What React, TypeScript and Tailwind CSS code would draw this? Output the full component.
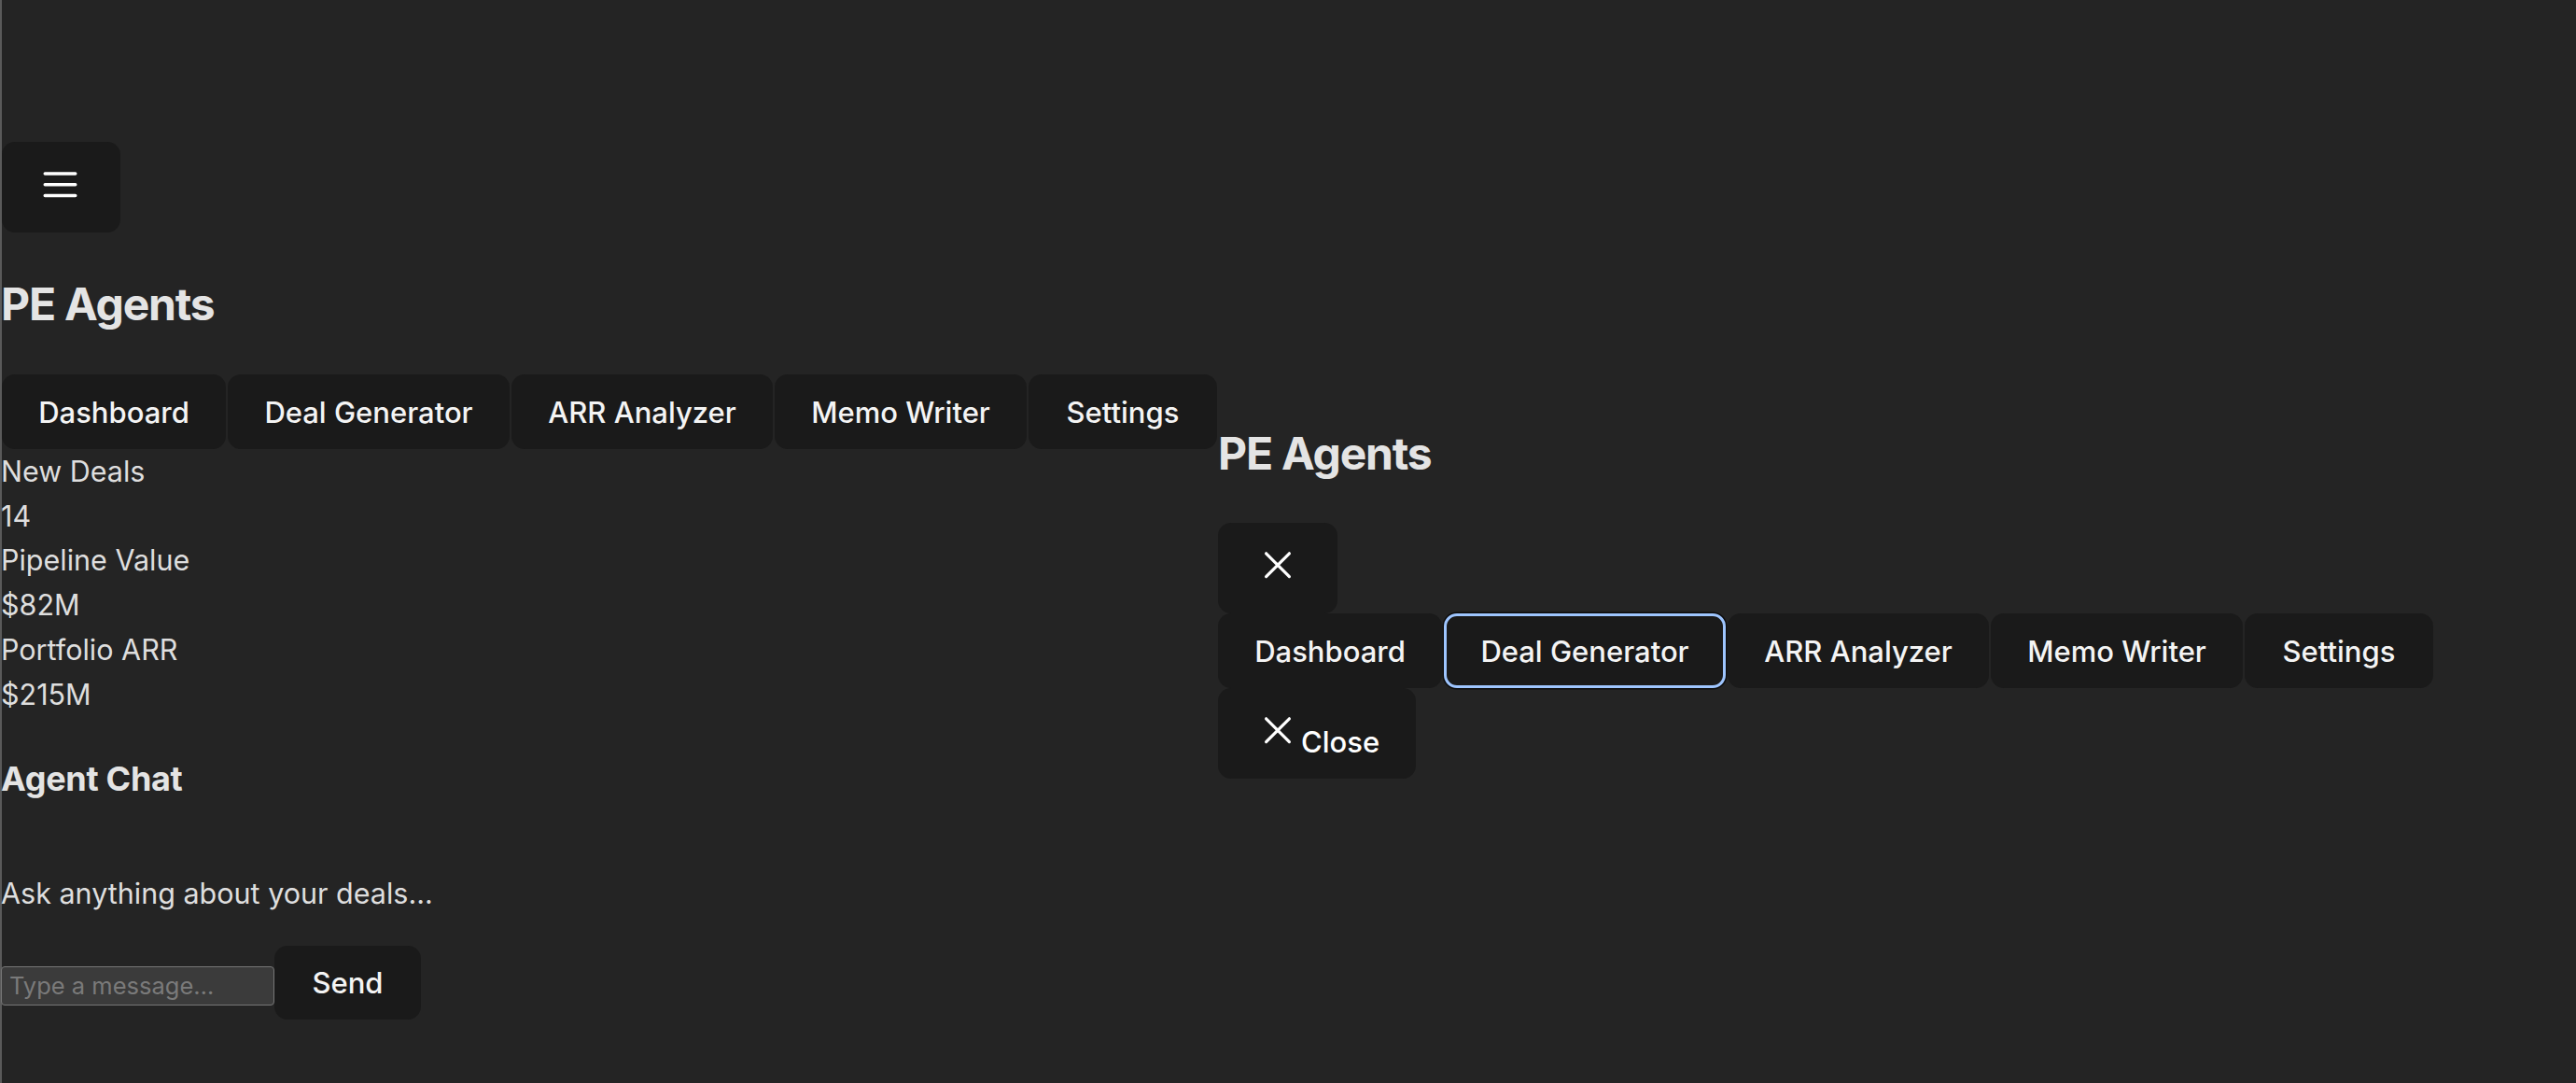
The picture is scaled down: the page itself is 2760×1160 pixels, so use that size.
import type { ReactNode } from 'react';

const tabs = [
  { label: 'Dashboard', w: 'w-[240px]' },
  { label: 'Deal Generator', w: 'w-[302px]' },
  { label: 'ARR Analyzer', w: 'w-[280px]' },
  { label: 'Memo Writer', w: 'w-[270px]' },
  { label: 'Settings', w: 'w-[202px]' },
];

const stats = [
  ['New Deals', '14'],
  ['Pipeline Value', '$82M'],
  ['Portfolio ARR', '$215M'],
];

function MenuIcon() {
  return (
    <svg width="48" height="48" viewBox="0 0 48 48" fill="none" stroke="currentColor" strokeWidth="3.4" strokeLinecap="round">
      <path d="M6.2 9h32.6M6.2 20.8h32.6M6.2 32.5h32.6" />
    </svg>
  );
}

function CloseIcon() {
  return (
    <svg width="48" height="48" viewBox="0 0 48 48" fill="none" stroke="currentColor" strokeWidth="3.2" strokeLinecap="round">
      <path d="M11.6 7.8 36.4 32.6M36.4 7.8 11.6 32.6" />
    </svg>
  );
}

function Btn({ className = '', children }: { className?: string; children: ReactNode }) {
  return (
    <button className={`rounded-[14px] bg-[#1a1a1a] text-[#f4f4f4] font-medium text-[31px] ${className}`}>
      {children}
    </button>
  );
}

function Nav({ focused }: { focused?: string }) {
  return (
    <nav className="flex gap-[2px]">
      {tabs.map((t) => (
        <Btn
          key={t.label}
          className={`${t.w} h-[80px] pt-[2px] ${
            t.label === focused ? 'border-[3.5px] border-[#9ec5fe] shadow-[0_0_0_1.5px_#0c0c0c]' : ''
          }`}
        >
          {t.label}
        </Btn>
      ))}
    </nav>
  );
}

function Title() {
  return <h1 className="text-[48px] leading-[53px] font-bold text-[#e4e4e4] tracking-[-1.2px]">PE Agents</h1>;
}

export default function App() {
  return (
    <div className="min-h-screen bg-[#242424] font-[Inter,sans-serif] flex">
      {/* sidebar */}
      <aside className="border-l-2 border-[#5a5a5a] pt-[152px] flex flex-col items-start">
        <Btn className="w-[127px] h-[97px] flex items-center justify-center text-white">
          <MenuIcon />
        </Btn>
        <div className="mt-[50px] mb-[49px] -ml-px">
          <Title />
        </div>
        <Nav />

        <div className="-ml-px text-[30.5px] leading-[47.7px] text-[#dedede]">
          {stats.map(([label, value]) => (
            <div key={label}>
              <div>{label}</div>
              <div>{value}</div>
            </div>
          ))}
        </div>

        <h3 className="-ml-px mt-[40px] text-[36px] leading-[55px] font-bold text-[#e4e4e4] tracking-[-0.3px]">Agent Chat</h3>

        <p className="-ml-px mt-[71px] text-[30.5px] leading-[47.5px] text-[#dedede]">Ask anything about your deals...</p>

        <div className="mt-[32px] flex items-start -ml-px">
          <input
            placeholder="Type a message…"
            className="mt-[22px] w-[293px] h-[42px] px-[8px] rounded-[4px] bg-[#3b3b3b] border-[1.75px] border-[#767676] text-[25.5px] text-white placeholder:text-[#7a7a7a] outline-none"
          />
          <Btn className="w-[157px] h-[79px] pt-[3px]">Send</Btn>
        </div>
      </aside>

      {/* open mobile menu */}
      <section className="pl-px pt-[459px] flex flex-col items-start">
        <Title />
        <Btn className="mt-[48px] w-[128px] h-[97px] flex items-center justify-center text-white">
          <CloseIcon />
        </Btn>
        <Nav focused="Deal Generator" />
        <Btn className="w-[212px] h-[97px] flex items-start pt-[25px] pl-[40px] text-white">
          <CloseIcon />
          <span className="ml-px mt-[14px] leading-[38px]">Close</span>
        </Btn>
      </section>
    </div>
  );
}
